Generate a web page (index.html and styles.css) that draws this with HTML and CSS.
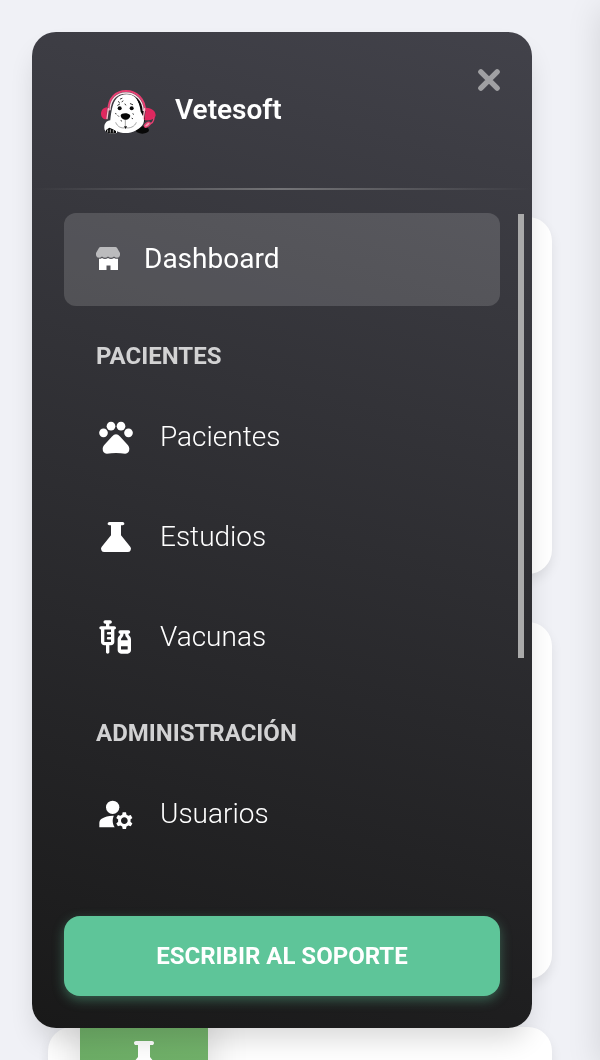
FILE: index.html
```html
<!DOCTYPE html>
<html lang="es">
<head>
    <meta charset="UTF-8">
    <meta name="viewport" content="width=device-width, initial-scale=1">
    <title>Vetesoft</title>
    <link rel="stylesheet" href="styles.css">
</head>
<body>
    <aside class="sidebar">
        <div class="sidebar-header">
            <a class="brand" href="#">
                <svg class="brand-logo" viewBox="30 24 171 138" aria-hidden="true">
                    <ellipse cx="157" cy="150" rx="20" ry="11" fill="#080808"/>
                    <path d="M140 53c20 10 26 42 24 72l-24 18z" fill="#080808"/>
                    <path d="M43 144c-1-12 6-22 18-23l20 8v29c-16 5-36 4-38-14z" fill="#fff"/>
                    <path d="M48 150l10-7 11 5 9 4v7c-11 3-21 2-30-3z" fill="#080808"/>
                    <path d="M53 149v8M61 148v10M70 150v8" stroke="#fff" stroke-width="2"/>
                    <path d="M80 55c13-15 43-16 55-3 14 15 21 41 27 67 1 15-12 26-26 33-17 10-43 9-58 0-16-8-20-20-17-33 3-24 6-49 19-64z" fill="#fff"/>
                    <path d="M137 50c15 12 23 38 24 62l-9-17c-2-17-6-31-15-45z" fill="#080808"/>
                    <path d="M55 92C55 55 77 33 108 33c32 0 57 24 57 60" fill="none" stroke="#e83f72" stroke-width="6"/>
                    <path d="M60 91C61 58 80 39 108 39c29 0 51 22 52 54" fill="none" stroke="#ffe3ea" stroke-width="4"/>
                    <path d="M51 82c-11 1-18 9-18 20 0 9 7 17 17 16zM168 83l-5 37c15 3 30-2 34-13 1-13-11-24-29-24z" fill="#df285f"/>
                    <path d="M55 86l-4 30M164 86l-4 30" stroke="#ffc0d0" stroke-width="4" stroke-linecap="round"/>
                    <path d="M192 112c0 13-6 20-18 22" fill="none" stroke="#e83f72" stroke-width="4"/>
                    <ellipse cx="172" cy="134" rx="10" ry="5" transform="rotate(-38 172 134)" fill="#e9a0b3" stroke="#e83f72" stroke-width="4"/>
                    <path d="M92 106c1-8 22-9 28-1 3 7-6 14-14 15-9-1-14-7-14-14z" fill="#080808"/>
                    <path d="M106 118v20M77 127c5 13 17 19 29 16 14 3 28-3 33-16" fill="none" stroke="#777" stroke-width="2"/>
                    <path d="M102 139h9l-4 8z" fill="#080808"/>
                    <circle cx="89" cy="85" r="6" fill="#080808"/>
                    <circle cx="125" cy="85" r="6" fill="#080808"/>
                    <path d="M83 76l6-4M121 71l7 3M91 57l5-2M85 65l3 2M96 65l3-2M105 72l2 3M77 100l1 2M84 107l2 2M93 122l2 1M129 101l1 2M126 115l2 1" stroke="#333" stroke-width="3" stroke-linecap="round"/>
                </svg>
                <span>Vetesoft</span>
            </a>
            <button class="close-btn" type="button" aria-label="Cerrar menú">
                <svg viewBox="0 0 24 24" aria-hidden="true">
                    <path d="M4.500 4.500l15 15M19.500 4.500l-15 15" fill="none" stroke="currentColor" stroke-width="5" stroke-linecap="round"/>
                </svg>
            </button>
        </div>
        <hr class="divider">
        <nav class="sidebar-nav">
            <a class="nav-link active" href="#">
                <svg class="store-icon" viewBox="0 0 24 24" aria-hidden="true">
                    <path d="M4.500 0h15q1 0 1.600 1L24 6v2.200q-.5 2.600-3 2.600-1.600 0-3-1.200-1.500 1.200-3 1.200t-3-1.200q-1.500 1.200-3 1.200t-3-1.200q-1.500 1.200-3 1.200-2.500 0-3-2.600V6L2.900 1q.6-1 1.600-1z" fill="#bbbbbd"/>
                    <path d="M3 11.800q1.700.1 3-.9 1.500 1 3 1t3-1q1.500 1 3 1t3-1q1.500 1 4 .9V23h-7.500v-4.500h-4V23H3z"/>
                </svg>
                <span>Dashboard</span>
            </a>

            <h6>Pacientes</h6>
            <a class="nav-link" href="#">
                <svg viewBox="0 0 24 24" aria-hidden="true">
                    <circle cx="4.500" cy="9.500" r="2.600"/>
                    <circle cx="9" cy="5.500" r="2.600"/>
                    <circle cx="15" cy="5.500" r="2.600"/>
                    <circle cx="19.500" cy="9.500" r="2.600"/>
                    <path d="M6.500 22q-2.500-.2-2.500-3 0-1 .8-2l4.800-5.300Q12 9 14.400 11.700l4.800 5.300q.8 1 .8 2 0 2.800-2.500 3-1.400 0-2.700-.2-2.800-.3-5.600 0-1.300.2-2.700.2z"/>
                </svg>
                <span>Pacientes</span>
            </a>
            <a class="nav-link" href="#">
                <svg viewBox="0 0 24 24" aria-hidden="true">
                    <path d="M5 21q-1.250 0-1.787-1.113T3.450 17.850L9 11V5H8q-.425 0-.712-.288T7 4t.288-.712T8 3h8q.425 0 .713.288T17 4t-.288.713T16 5h-1v6l5.550 6.850q.775.925.238 2.038T19 21z"/>
                </svg>
                <span>Estudios</span>
            </a>
            <a class="nav-link" href="#">
                <svg viewBox="0 0 24 24" aria-hidden="true">
                    <path d="M11 5.500H8V4h.5c.55 0 1-.45 1-1s-.45-1-1-1h-3c-.55 0-1 .45-1 1s.45 1 1 1H6v1.500H3c-.55 0-1 .45-1 1s.45 1 1 1V15c0 1.100.9 2 2 2h1v4.200c0 1.100 2 1.100 2 0V17h1c1.100 0 2-.9 2-2V7.500c.55 0 1-.45 1-1s-.45-1-1-1zM9 9H7.250c-.41 0-.75.34-.75.75s.34.75.75.75H9V12H7.250c-.41 0-.75.34-.75.75s.34.75.75.75H9V15H5V7.500h4z"/>
                    <path fill-rule="evenodd" d="M19.500 10.500V10c.55 0 1-.45 1-1s-.45-1-1-1h-5c-.55 0-1 .45-1 1s.45 1 1 1v.5c0 .5-1.500 1.160-1.500 3V20c0 1.100.9 2 2 2h4c1.100 0 2-.9 2-2v-6.500c0-1.840-1.500-2.500-1.500-3zM16.500 10h1v.5c0 1.600 1.500 2 1.500 3v.5h-4v-.5c0-1 1.500-1.500 1.500-3zM15 17.500h4V19.500h-4z"/>
                </svg>
                <span>Vacunas</span>
            </a>

            <h6>Administración</h6>
            <a class="nav-link" href="#">
                <svg viewBox="0 0 24 24" aria-hidden="true">
                    <circle cx="10" cy="8" r="4"/>
                    <path d="M10.670 13.020C10.450 13.010 10.230 13 10 13c-2.420 0-4.680.67-6.610 1.820C2.510 15.340 2 16.320 2 17.350V20h9.260c-.79-1.130-1.260-2.510-1.260-4 0-1.070.25-2.070.67-2.980z"/>
                    <path d="M20.750 16c0-.22-.03-.42-.06-.63l1.140-1.010-1-1.730-1.450.49c-.32-.27-.68-.48-1.080-.63L18 11h-2l-.3 1.490c-.4.15-.76.36-1.080.63l-1.450-.49-1 1.730 1.140 1.010c-.03.21-.06.41-.06.63s.03.42.06.63l-1.140 1.010 1 1.730 1.450-.49c.32.27.68.48 1.080.63L16 21h2l.3-1.490c.4-.15.76-.36 1.080-.63l1.450.49 1-1.730-1.140-1.010c.03-.21.06-.41.06-.63zM17 18c-1.100 0-2-.9-2-2s.9-2 2-2 2 .9 2 2-.9 2-2 2z"/>
                </svg>
                <span>Usuarios</span>
            </a>
            <span class="scroll-thumb"></span>
        </nav>
        <div class="sidebar-footer">
            <button class="support-btn" type="button">Escribir al soporte</button>
        </div>
    </aside>

    <main class="content">
        <section class="card"></section>
        <section class="card"></section>
        <section class="card">
            <div class="card-icon">
                <svg viewBox="0 0 24 24" aria-hidden="true">
                    <path d="M5 21q-1.250 0-1.787-1.113T3.450 17.850L9 11V5H8q-.425 0-.712-.288T7 4t.288-.712T8 3h8q.425 0 .713.288T17 4t-.288.713T16 5h-1v6l5.550 6.850q.775.925.238 2.038T19 21z"/>
                </svg>
            </div>
        </section>
    </main>

    <!-- settings panel, closed -->
    <div class="settings-panel"></div>
</body>
</html>
```
FILE: styles.css
```css
* {
    margin: 0;
    padding: 0;
    box-sizing: border-box;
}

body {
    font-family: Roboto, "Liberation Sans", sans-serif;
    background-color: #f0f1f6;
    color: #fff;
    overflow: hidden;
}

a {
    color: inherit;
    text-decoration: none;
}

button {
    font-family: inherit;
    border: none;
    cursor: pointer;
}

svg {
    display: block;
    fill: currentColor;
}

/* Sidebar, opened over the page */
.sidebar {
    position: fixed;
    top: 32px;
    bottom: 32px;
    left: 32px;
    z-index: 10;
    width: calc(100% - 100px);
    max-width: 500px;
    display: flex;
    flex-direction: column;
    border-radius: 24px;
    background: linear-gradient(195deg, #42424a, #191919);
    box-shadow: 0 16px 28px -6px rgba(0, 0, 0, 0.16);
}

.sidebar-header {
    display: flex;
    justify-content: space-between;
    align-items: flex-start;
    padding: 56px 30px 54px 68px;
}

.brand {
    display: flex;
    align-items: center;
    gap: 18px;
    font-size: 28px;
    font-weight: 600;
}

.brand span {
    padding-bottom: 4px;
}

.brand-logo {
    width: 57px;
    height: 46px;
}

.close-btn {
    width: 26px;
    height: 26px;
    margin-top: -21px;
    background: none;
    color: #a0a0a3;
}

.divider {
    height: 2px;
    border: none;
    background: linear-gradient(90deg, transparent, #747477, transparent);
}

.sidebar-nav {
    position: relative;
    flex: 1;
    min-height: 0;
    display: flex;
    flex-direction: column;
    gap: 7px;
    padding: 23px 32px 0;
}

.nav-link {
    display: flex;
    flex-shrink: 0;
    align-items: center;
    gap: 24px;
    height: 93px;
    padding: 0 32px;
    border-radius: 12px;
    font-size: 28px;
    font-weight: 300;
}

.nav-link svg {
    width: 40px;
    height: 40px;
}

.nav-link .store-icon {
    width: 24px;
    height: 24px;
}

.nav-link.active {
    padding-bottom: 2px;
    background-color: rgba(255, 255, 255, 0.15);
    font-weight: 400;
}

.sidebar-nav h6 {
    margin: 29px 32px 13px;
    font-size: 24px;
    line-height: 28px;
    font-weight: 700;
    text-transform: uppercase;
    color: #d2d2d3;
}

.scroll-thumb {
    position: absolute;
    top: 24px;
    right: 8px;
    width: 6px;
    height: 444px;
    background-color: #aaa;
}

.sidebar-footer {
    padding: 0 32px 32px;
}

.support-btn {
    width: 100%;
    height: 80px;
    border-radius: 16px;
    background-color: #5ec599;
    color: #fff;
    font-size: 24px;
    font-weight: 700;
    text-transform: uppercase;
    box-shadow: 0 4px 12px rgba(94, 197, 153, 0.4);
}

/* Page content */
.content {
    height: 100vh;
    overflow: hidden;
    display: flex;
    flex-direction: column;
    gap: 48px;
    padding: 217px 48px 0;
}

.card {
    flex-shrink: 0;
    min-height: 357px;
    padding: 0 32px;
    border-radius: 24px;
    background-color: #fff;
    box-shadow: 0 6px 12px rgba(0, 0, 0, 0.08);
}

.card-icon {
    display: flex;
    justify-content: center;
    align-items: center;
    width: 128px;
    height: 128px;
    margin-top: -32px;
    border-radius: 24px;
    background: linear-gradient(195deg, #79b770, #64a75f);
    box-shadow: 0 8px 40px rgba(0, 0, 0, 0.15);
}

.card-icon svg {
    width: 48px;
    height: 48px;
}

.settings-panel {
    position: fixed;
    top: 0;
    bottom: 0;
    left: 100%;
    width: 360px;
    background-color: #fff;
    box-shadow: 0 8px 32px rgba(0, 0, 0, 0.12);
}
```
